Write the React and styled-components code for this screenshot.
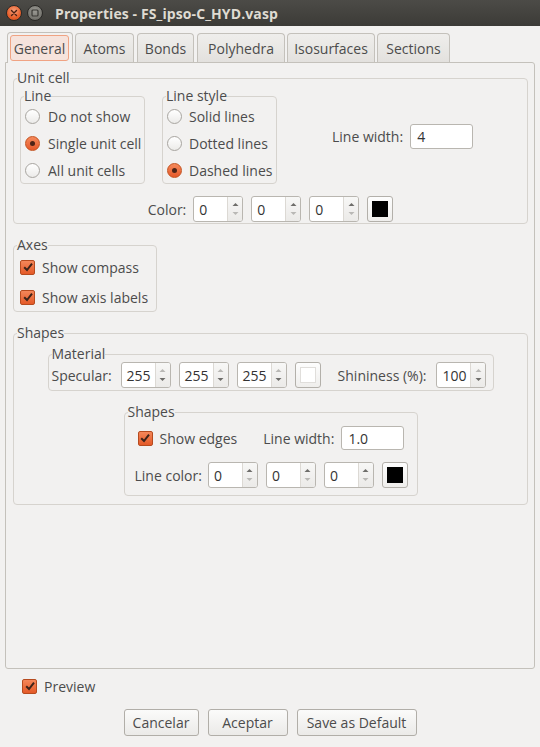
import React from 'react';
import styled, { createGlobalStyle, css } from 'styled-components';

const GlobalStyle = createGlobalStyle`
  html, body { margin: 0; padding: 0; background: #f2f1f0; }
  body {
    font-family: "Open Sans", "DejaVu Sans", sans-serif;
    font-size: 14px;
    color: #4a4a4a;
  }
  * { box-sizing: border-box; }
`;

const Window = styled.div`
  width: 540px;
  height: 747px;
  display: flex;
  flex-direction: column;
  background: #f2f1f0;
  overflow: hidden;
`;

const TitleBar = styled.div`
  height: 26px;
  flex: none;
  display: flex;
  align-items: center;
  padding-left: 6px;
  gap: 5px;
  background: linear-gradient(#4c4b47, #3c3b37);
`;

const WinButton = styled.div`
  width: 16px;
  height: 16px;
  border-radius: 50%;
  display: flex;
  align-items: center;
  justify-content: center;
  border: 1px solid #2a2926;
  ${(p) =>
    p.$close
      ? css`background: radial-gradient(circle at 50% 35%, #f6a07c, #e8602c 60%, #c9491b);`
      : css`background: radial-gradient(circle at 50% 35%, #9a9993, #7a7973 60%, #5f5e59);`}
`;

const Title = styled.div`
  margin-left: 7px;
  font-weight: 700;
  font-size: 14px;
  color: #dfdbd2;
  letter-spacing: 0.1px;
`;

const Content = styled.div`
  flex: 1;
  display: flex;
  flex-direction: column;
  padding: 0 5px;
`;

const TabRow = styled.div`
  display: flex;
  align-items: flex-end;
  height: 36px;
  padding-left: 2px;
  gap: 2px;
  position: relative;
  z-index: 1;
`;

const Tab = styled.div`
  width: ${(p) => p.$w}px;
  margin-right: ${(p) => p.$mr || 0}px;
  display: flex;
  align-items: center;
  justify-content: center;
  border: 1px solid #c4c1bb;
  border-bottom: none;
  border-radius: 4px 4px 0 0;
  color: #4c4c4c;
  ${(p) =>
    p.$active
      ? css`
          height: 31px;
          margin-bottom: -1px;
          background: #f2f1f0;
          padding: 2px 3px 2px 2px;
        `
      : css`
          height: 29px;
          background: linear-gradient(#efeeec, #e3e1de);
        `}
`;

const FocusRing = styled.div`
  flex: 1;
  align-self: stretch;
  display: flex;
  align-items: center;
  justify-content: center;
  border: 1px solid #f0a383;
  border-radius: 3px;
  background: #f6e3dc;
`;

const Page = styled.div`
  height: 607px;
  flex: none;
  border: 1px solid #c4c1bb;
  border-radius: 0 3px 3px 3px;
  background: #f2f1f0;
  display: flex;
  flex-direction: column;
  padding: 7px 6px 0 7px;
`;

const Group = styled.fieldset`
  margin: 0;
  padding: 0;
  min-width: 0;
  border: 1px solid #d6d3ce;
  border-radius: 4px;
  display: flex;
  flex-direction: column;
  ${(p) => p.$w && css`width: ${p.$w}px; flex: none;`}
  ${(p) => p.$center && css`align-self: center;`}
  ${(p) => p.$start && css`align-self: flex-start;`}
  margin-top: ${(p) => p.$mt || 0}px;
  padding-bottom: ${(p) => p.$pb || 0}px;
`;

const Legend = styled.legend`
  padding: 0;
  margin-left: 3px;
  line-height: 16px;
  font-size: 14px;
  color: #4c4c4c;
`;

const Row = styled.div`
  display: flex;
  align-items: center;
  gap: ${(p) => p.$gap ?? 7}px;
  ${(p) => p.$h && css`height: ${p.$h}px;`}
  padding-left: ${(p) => p.$pl || 0}px;
  margin-top: ${(p) => p.$mt || 0}px;
  ${(p) => p.$center && css`justify-content: center;`}
`;

const Column = styled.div`
  display: flex;
  flex-direction: column;
  gap: ${(p) => p.$gap}px;
  padding: ${(p) => p.$pad};
`;

const Label = styled.span`
  white-space: nowrap;
  color: #4c4c4c;
  margin-left: ${(p) => p.$ml || 0}px;
  margin-right: ${(p) => p.$mr || 0}px;
`;

const RadioCircle = styled.span`
  width: 15px;
  height: 15px;
  border-radius: 50%;
  flex: none;
  display: flex;
  align-items: center;
  justify-content: center;
  ${(p) =>
    p.$on
      ? css`
          border: 1px solid #c4521f;
          background: linear-gradient(#f58a5c, #e5592a);
          &::after {
            content: '';
            width: 5px;
            height: 5px;
            border-radius: 50%;
            background: #4d2417;
          }
        `
      : css`
          border: 1px solid #a8a5a0;
          background: linear-gradient(#ffffff, #ecebe9);
        `}
`;

const CheckBox = styled.span`
  width: 15px;
  height: 15px;
  flex: none;
  border-radius: 2px;
  border: 1px solid #b64b1f;
  background: linear-gradient(#f4875a, #e45a28);
  display: flex;
  align-items: center;
  justify-content: center;
`;

const Entry = styled.div`
  width: ${(p) => p.$w}px;
  height: ${(p) => p.$h}px;
  border: 1px solid #b9b6b0;
  border-radius: 3px;
  background: #fff;
  padding-left: 6px;
  display: flex;
  align-items: center;
  color: #333;
  flex: none;
  margin-left: ${(p) => p.$ml || 0}px;
`;

const Spin = styled.div`
  width: 50px;
  height: 26px;
  flex: none;
  display: flex;
  border: 1px solid #b9b6b0;
  border-radius: 3px;
  background: #fff;
  overflow: hidden;
  margin-left: ${(p) => p.$ml || 0}px;
`;

const SpinValue = styled.div`
  flex: 1;
  padding-left: 5px;
  display: flex;
  align-items: center;
  color: #333;
`;

const SpinArrows = styled.div`
  width: 15px;
  flex: none;
  border-left: 1px solid #dcd9d4;
  background: linear-gradient(#f7f7f6, #ebeae8);
  display: flex;
  align-items: center;
  justify-content: center;
`;

const ColorButton = styled.div`
  width: 26px;
  height: 26px;
  flex: none;
  border: 1px solid #b3b0aa;
  border-radius: 3px;
  background: linear-gradient(#fdfdfd, #efeeec);
  display: flex;
  align-items: center;
  justify-content: center;
`;

const Swatch = styled.div`
  width: 16px;
  height: 16px;
  background: ${(p) => p.$c};
  ${(p) => p.$c !== '#000' && css`border: 1px solid #e0dedb;`}
`;

const BottomRow = styled.div`
  height: 34px;
  display: flex;
  align-items: center;
  padding-left: 17px;
  gap: 7px;
`;

const ButtonRow = styled.div`
  display: flex;
  justify-content: center;
  gap: 9px;
  margin-top: 6px;
`;

const Button = styled.div`
  width: ${(p) => p.$w}px;
  height: 27px;
  border: 1px solid #b1aea8;
  border-radius: 3px;
  background: linear-gradient(#fbfbfa, #ebeae8);
  display: flex;
  align-items: center;
  justify-content: center;
  color: #4c4c4c;
`;

const CloseIcon = () => (
  <svg width="8" height="8" viewBox="0 0 8 8">
    <path d="M1.5 1.5 L6.5 6.5 M6.5 1.5 L1.5 6.5" stroke="#4a2114" strokeWidth="1.4" strokeLinecap="round" />
  </svg>
);

const MaxIcon = () => (
  <svg width="8" height="8" viewBox="0 0 8 8">
    <rect x="1" y="1" width="6" height="6" rx="1" fill="none" stroke="#3a3935" strokeWidth="1.2" />
  </svg>
);

const CheckMark = () => (
  <svg width="12" height="12" viewBox="0 0 12 12">
    <path d="M2.2 6.2 L5 9 L10 2.6" fill="none" stroke="#3d241a" strokeWidth="2" strokeLinejoin="miter" />
  </svg>
);

const Arrows = ({ atMax }) => (
  <svg width="7" height="16" viewBox="0 0 7 16">
    <path d="M0.5 5 L3.5 2 L6.5 5 Z" fill={atMax ? '#b9b8b5' : '#6e6d6a'} />
    <path d="M0.5 11 L3.5 14 L6.5 11 Z" fill={atMax ? '#6e6d6a' : '#b9b8b5'} />
  </svg>
);

const SpinBox = ({ value, atMax, ml }) => (
  <Spin $ml={ml}>
    <SpinValue>{value}</SpinValue>
    <SpinArrows>
      <Arrows atMax={atMax} />
    </SpinArrows>
  </Spin>
);

const Radio = ({ on, children, gap = 8 }) => (
  <Row $h={22} $gap={gap}>
    <RadioCircle $on={on} />
    <Label>{children}</Label>
  </Row>
);

const Check = ({ children, h = 24 }) => (
  <Row $h={h} $gap={7}>
    <CheckBox>
      <CheckMark />
    </CheckBox>
    <Label>{children}</Label>
  </Row>
);

const tabs = [
  { name: 'General', w: 66, active: true },
  { name: 'Atoms', w: 59, mr: 1 },
  { name: 'Bonds', w: 57, mr: 1 },
  { name: 'Polyhedra', w: 88 },
  { name: 'Isosurfaces', w: 88 },
  { name: 'Sections', w: 73 },
];

export default function App() {
  return (
    <Window>
      <GlobalStyle />
      <TitleBar>
        <WinButton $close>
          <CloseIcon />
        </WinButton>
        <WinButton>
          <MaxIcon />
        </WinButton>
        <Title>Properties - FS_ipso-C_HYD.vasp</Title>
      </TitleBar>
      <Content>
        <TabRow>
          {tabs.map((t) => (
            <Tab key={t.name} $w={t.w} $mr={t.mr} $active={t.active}>
              {t.active ? <FocusRing>{t.name}</FocusRing> : t.name}
            </Tab>
          ))}
        </TabRow>
        <Page>
          <Group>
            <Legend>Unit cell</Legend>
            <Row $pl={6} $gap={17} $mt={2}>
              <Group $w={125} $pb={2}>
                <Legend>Line</Legend>
                <Column $gap={5} $pad="1px 0 0 4px">
                  <Radio>Do not show</Radio>
                  <Radio on>Single unit cell</Radio>
                  <Radio>All unit cells</Radio>
                </Column>
              </Group>
              <Group $w={115} $pb={2}>
                <Legend>Line style</Legend>
                <Column $gap={5} $pad="1px 0 0 4px">
                  <Radio gap={7}>Solid lines</Radio>
                  <Radio gap={7}>Dotted lines</Radio>
                  <Radio gap={7} on>Dashed lines</Radio>
                </Column>
              </Group>
              <Label $ml={38}>Line width:</Label>
              <Entry $w={63} $h={25} $ml={-10}>4</Entry>
            </Row>
            <Row $center $gap={8} $mt={12} style={{ marginBottom: 1 }}>
              <Label $mr={-1}>Color:</Label>
              <SpinBox value="0" />
              <SpinBox value="0" />
              <SpinBox value="0" />
              <ColorButton>
                <Swatch $c="#000" />
              </ColorButton>
            </Row>
          </Group>

          <Group $w={144} $start $mt={13} $pb={2}>
            <Legend>Axes</Legend>
            <Column $gap={6} $pad="2px 0 0 6px">
              <Check>Show compass</Check>
              <Check>Show axis labels</Check>
            </Column>
          </Group>

          <Group $mt={13} $pb={8}>
            <Legend>Shapes</Legend>
            <Group $w={446} $center $mt={5} $pb={2}>
              <Legend>Material</Legend>
              <Row $pl={3} $gap={8}>
                <Label $mr={1}>Specular:</Label>
                <SpinBox value="255" atMax />
                <SpinBox value="255" atMax />
                <SpinBox value="255" atMax />
                <ColorButton>
                  <Swatch $c="#fff" />
                </ColorButton>
                <Label $ml={9}>Shininess (%):</Label>
                <SpinBox value="100" atMax ml={2} />
              </Row>
            </Group>
            <Group $w={294} $center $mt={13} $pb={7}>
              <Legend>Shapes</Legend>
              <Row $pl={13} $gap={7} $mt={6}>
                <Check>Show edges</Check>
                <Label $ml={19}>Line width:</Label>
                <Entry $w={63} $h={24}>1.0</Entry>
              </Row>
              <Row $pl={10} $gap={8} $mt={12}>
                <Label $mr={-2}>Line color:</Label>
                <SpinBox value="0" />
                <SpinBox value="0" />
                <SpinBox value="0" />
                <ColorButton>
                  <Swatch $c="#000" />
                </ColorButton>
              </Row>
            </Group>
          </Group>
        </Page>
        <BottomRow>
          <CheckBox>
            <CheckMark />
          </CheckBox>
          <Label>Preview</Label>
        </BottomRow>
        <ButtonRow>
          <Button $w={75}>Cancelar</Button>
          <Button $w={80}>Aceptar</Button>
          <Button $w={120}>Save as Default</Button>
        </ButtonRow>
      </Content>
    </Window>
  );
}
